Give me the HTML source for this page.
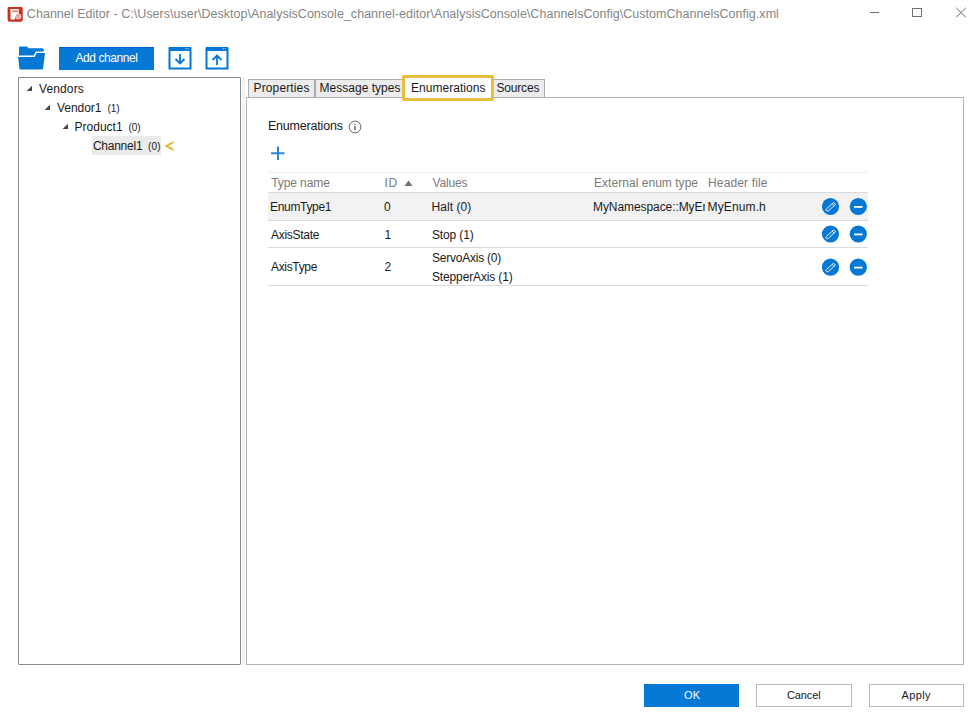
<!DOCTYPE html>
<html><head><meta charset="utf-8">
<style>
html,body{margin:0;padding:0;background:#fff;}
body{width:980px;height:723px;position:relative;overflow:hidden;font-family:"Liberation Sans",sans-serif;color:#1a1a1a;}
.a{position:absolute;box-sizing:border-box;}
.t{position:absolute;white-space:nowrap;line-height:normal;}
svg{position:absolute;}
</style></head><body>

<!-- title icon -->
<svg style="left:7px;top:7px" width="16" height="15" viewBox="0 0 16 15">
  <rect x="0.6" y="-0.2" width="15.1" height="14.9" rx="2" fill="#c5321c"/>
  <path d="M3.1 2.1 H11.7 V8 A3.4 3.4 0 0 0 8 12.4 H3.1 L3.9 11.2 L3.1 10 L3.9 8.8 L3.1 7.6 L3.9 6.4 L3.1 5.2 L3.9 4 L3.1 2.8 Z" fill="#fff"/>
  <rect x="5.1" y="3.2" width="5.8" height="2.2" fill="#e59a8e"/>
  <circle cx="11.2" cy="9.4" r="2.9" fill="#fff"/>
  <circle cx="11.2" cy="9.4" r="2.0" fill="none" stroke="#d2594a" stroke-width="0.7"/>
  <rect x="10.6" y="8" width="1.2" height="2.6" fill="#e07a6c"/>
</svg>
<!-- window controls -->
<div class="a" style="left:870px;top:12px;width:9px;height:1px;background:#707070"></div>
<div class="a" style="left:912px;top:8px;width:10px;height:9px;border:1px solid #707070"></div>
<svg style="left:955px;top:7px" width="12" height="11" viewBox="0 0 12 11"><path d="M1.2 0.8L10.8 10.2M10.8 0.8L1.2 10.2" stroke="#707070" stroke-width="1"/></svg>

<!-- toolbar: folder -->
<svg style="left:18px;top:46px" width="28" height="25" viewBox="0 0 28 25">
  <path d="M1 1.8 Q1 0.6 2.2 0.6 H9.3 L10.4 2.2 H24.1 Q25.8 2.2 25.8 3.9 V14 H1 Z" fill="#0578d6"/>
  <path d="M-1 10.2 H16.3 L18.4 6.3 H28" fill="none" stroke="#fff" stroke-width="1.5"/>
  <path d="M0.1 11 H16.8 L18.9 7.1 H27 L25.1 22.6 Q25 23.4 24.2 23.4 H2.3 Q1.5 23.4 1.4 22.6 Z" fill="#0578d6"/>
</svg>
<!-- add channel btn -->
<div class="a" style="left:59px;top:47px;width:95px;height:23px;background:#0678d6;border-top:1px solid #0062cc"></div>
<!-- download -->
<svg style="left:168px;top:46px" width="24" height="24" viewBox="0 0 24 24">
  <rect x="1.5" y="2.5" width="21" height="20" fill="none" stroke="#0578d6" stroke-width="2"/>
  <rect x="1" y="1" width="22" height="4" fill="#0578d6"/>
  <rect x="17.6" y="2.4" width="1.3" height="0.9" fill="#cfe3f7"/><rect x="19.6" y="2.4" width="1.3" height="0.9" fill="#cfe3f7"/>
  <path d="M12 8 V17.5 M7.5 13 L12 17.5 L16.5 13" fill="none" stroke="#0578d6" stroke-width="1.8"/>
</svg>
<!-- upload -->
<svg style="left:205px;top:46px" width="24" height="24" viewBox="0 0 24 24">
  <rect x="1.5" y="2.5" width="21" height="20" fill="none" stroke="#0578d6" stroke-width="2"/>
  <rect x="1" y="1" width="22" height="4" fill="#0578d6"/>
  <rect x="17.6" y="2.4" width="1.3" height="0.9" fill="#cfe3f7"/><rect x="19.6" y="2.4" width="1.3" height="0.9" fill="#cfe3f7"/>
  <path d="M12 19 V9.5 M7.5 14 L12 9.5 L16.5 14" fill="none" stroke="#0578d6" stroke-width="1.8"/>
</svg>

<!-- tree panel -->
<div class="a" style="left:18px;top:77px;width:223px;height:588px;border:1px solid #868c96;border-radius:1px"></div>
<!-- splitter -->
<div class="a" style="left:242px;top:77px;width:3px;height:588px;background:#f4f4f4"></div>
<!-- tree triangles -->
<svg style="left:26px;top:85px" width="7" height="7" viewBox="0 0 7 7"><path d="M6 0.8 V6 H0.6 Z" fill="#484848"/></svg>
<svg style="left:44px;top:104px" width="7" height="7" viewBox="0 0 7 7"><path d="M6 0.8 V6 H0.6 Z" fill="#484848"/></svg>
<svg style="left:62px;top:123px" width="7" height="7" viewBox="0 0 7 7"><path d="M6 0.8 V6 H0.6 Z" fill="#484848"/></svg>
<!-- selected channel highlight -->
<div class="a" style="left:92px;top:136px;width:69px;height:19px;background:#ebebeb"></div>
<!-- yellow < -->
<svg style="left:164px;top:140px" width="11" height="12" viewBox="0 0 11 12"><path d="M9.5 2 L2.5 6 L9.5 10" fill="none" stroke="#e8b32a" stroke-width="2"/></svg>

<!-- tabs -->
<div class="a" style="left:248px;top:79px;width:67px;height:19px;background:#ececec;border:1px solid #acacac;border-bottom:none;border-right:none"></div>
<div class="a" style="left:314px;top:79px;width:89px;height:19px;background:#ececec;border:1px solid #acacac;border-bottom:none;border-left:2px solid #acacac"></div>
<div class="a" style="left:493px;top:79px;width:52px;height:19px;background:#ececec;border:1px solid #acacac;border-bottom:none;border-left:none"></div>

<!-- tab panel -->
<div class="a" style="left:246px;top:97px;width:718px;height:568px;border:1px solid #b4b4b4"></div>
<!-- active tab -->
<div class="a" style="left:402px;top:75px;width:92px;height:26px;background:#fff;border:3px solid #ebbd3c;border-radius:2px"></div>

<!-- info icon -->
<svg style="left:348px;top:120px" width="14" height="14" viewBox="0 0 14 14">
  <circle cx="7" cy="7" r="5.9" fill="none" stroke="#555" stroke-width="0.9"/>
  <rect x="6.4" y="6" width="1.2" height="4.2" fill="#444"/>
  <rect x="6.4" y="3.8" width="1.2" height="1.2" fill="#444"/>
</svg>
<!-- plus -->
<svg style="left:270px;top:146px" width="16" height="15" viewBox="0 0 16 15">
  <path d="M8 0.5 V14 M1 7.25 H14.5" stroke="#2e86d8" stroke-width="2"/>
</svg>

<!-- table -->
<div class="a" style="left:268px;top:172px;width:600px;height:1px;background:#f0f0f0"></div>
<div class="a" style="left:268px;top:192px;width:600px;height:1px;background:#dadada"></div>
<div class="a" style="left:268px;top:193px;width:600px;height:27px;background:#f2f2f2"></div>
<div class="a" style="left:268px;top:220px;width:600px;height:1px;background:#dadada"></div>
<div class="a" style="left:268px;top:247px;width:600px;height:1px;background:#dadada"></div>
<div class="a" style="left:268px;top:285px;width:600px;height:1px;background:#dadada"></div>
<!-- sort triangle -->
<svg style="left:404px;top:180px" width="9" height="7" viewBox="0 0 9 7"><path d="M0.5 6 L4.5 0.5 L8.5 6 Z" fill="#707070"/></svg>
<!-- clip external enum type -->

<!-- row icons -->
<svg style="left:821px;top:197px" width="48" height="19" viewBox="0 0 48 19">
  <circle cx="9.5" cy="9.5" r="8.6" fill="#0578d6"/>
  <g transform="translate(9.7 9.9) rotate(-42)"><path d="M-4.4 -1.35 H5.2 V1.35 H-4.4 A1.35 1.35 0 0 1 -4.4 -1.35 Z M3.3 -1.35 V1.35" fill="none" stroke="#fff" stroke-width="0.85"/></g>
  <circle cx="37.3" cy="9.5" r="8.6" fill="#0578d6"/>
  <rect x="33.1" y="9" width="8.4" height="1.8" fill="#fff"/>
</svg>
<svg style="left:821px;top:224px;transform:translateY(0.5px)" width="48" height="19" viewBox="0 0 48 19">
  <circle cx="9.5" cy="9.5" r="8.6" fill="#0578d6"/>
  <g transform="translate(9.7 9.9) rotate(-42)"><path d="M-4.4 -1.35 H5.2 V1.35 H-4.4 A1.35 1.35 0 0 1 -4.4 -1.35 Z M3.3 -1.35 V1.35" fill="none" stroke="#fff" stroke-width="0.85"/></g>
  <circle cx="37.3" cy="9.5" r="8.6" fill="#0578d6"/>
  <rect x="33.1" y="9" width="8.4" height="1.8" fill="#fff"/>
</svg>
<svg style="left:821px;top:257px;transform:translateY(0.7px)" width="48" height="19" viewBox="0 0 48 19">
  <circle cx="9.5" cy="9.5" r="8.6" fill="#0578d6"/>
  <g transform="translate(9.7 9.9) rotate(-42)"><path d="M-4.4 -1.35 H5.2 V1.35 H-4.4 A1.35 1.35 0 0 1 -4.4 -1.35 Z M3.3 -1.35 V1.35" fill="none" stroke="#fff" stroke-width="0.85"/></g>
  <circle cx="37.3" cy="9.5" r="8.6" fill="#0578d6"/>
  <rect x="33.1" y="9" width="8.4" height="1.8" fill="#fff"/>
</svg>

<!-- bottom buttons -->
<div class="a" style="left:644px;top:684px;width:95px;height:23px;background:#0678d6"></div>
<div class="a" style="left:756px;top:684px;width:96px;height:23px;border:1px solid #b9b9b9;background:#fff"></div>
<div class="a" style="left:869px;top:684px;width:95px;height:23px;border:1px solid #b9b9b9;background:#fff"></div>

<div class="t" style="left:26.87px;top:7px;font-size:12.5px;letter-spacing:0.030px;color:#858585;">Channel Editor - C:\Users\user\Desktop\AnalysisConsole_channel-editor\AnalysisConsole\ChannelsConfig\CustomChannelsConfig.xml</div>
<div class="t" style="left:75.48px;top:51px;font-size:12px;letter-spacing:-0.439px;color:#ffffff;">Add channel</div>
<div class="t" style="left:38.95px;top:82px;font-size:12px;letter-spacing:0.132px;color:#1a1a1a;">Vendors</div>
<div class="t" style="left:56.95px;top:101px;font-size:12px;letter-spacing:-0.038px;color:#1a1a1a;">Vendor1</div>
<div class="t" style="left:107.38px;top:103px;font-size:10px;letter-spacing:0.009px;color:#1a1a1a;">(1)</div>
<div class="t" style="left:74.52px;top:120px;font-size:12px;letter-spacing:0.006px;color:#1a1a1a;">Product1</div>
<div class="t" style="left:128.38px;top:122px;font-size:10px;letter-spacing:0.009px;color:#1a1a1a;">(0)</div>
<div class="t" style="left:92.89px;top:139px;font-size:12px;letter-spacing:-0.240px;color:#1a1a1a;">Channel1</div>
<div class="t" style="left:147.88px;top:141px;font-size:10px;letter-spacing:0.259px;color:#1a1a1a;">(0)</div>
<div class="t" style="left:253.52px;top:81px;font-size:12px;letter-spacing:0.136px;color:#1a1a1a;">Properties</div>
<div class="t" style="left:319.52px;top:81px;font-size:12px;letter-spacing:0.018px;color:#1a1a1a;">Message types</div>
<div class="t" style="left:411.02px;top:81px;font-size:12px;letter-spacing:0.034px;color:#1a1a1a;">Enumerations</div>
<div class="t" style="left:496.46px;top:81px;font-size:12px;letter-spacing:-0.174px;color:#1a1a1a;">Sources</div>
<div class="t" style="left:267.97px;top:119px;font-size:12.5px;letter-spacing:-0.195px;color:#1a1a1a;">Enumerations</div>
<div class="t" style="left:271.23px;top:176px;font-size:12px;letter-spacing:-0.091px;color:#7a7a7a;">Type name</div>
<div class="t" style="left:384.39px;top:176px;font-size:12px;letter-spacing:0.682px;color:#7a7a7a;">ID</div>
<div class="t" style="left:432.45px;top:176px;font-size:12px;letter-spacing:-0.141px;color:#7a7a7a;">Values</div>
<div class="t" style="left:594.02px;top:176px;font-size:12px;letter-spacing:0.037px;color:#7a7a7a;">External enum type</div>
<div class="t" style="left:708.02px;top:176px;font-size:12px;letter-spacing:0.149px;color:#7a7a7a;">Header file</div>
<div class="t" style="left:270.02px;top:200px;font-size:12px;letter-spacing:-0.329px;color:#1a1a1a;">EnumType1</div>
<div class="t" style="left:384.03px;top:200px;font-size:12px;letter-spacing:0.000px;color:#1a1a1a;">0</div>
<div class="t" style="left:431.52px;top:200px;font-size:12px;letter-spacing:0.056px;color:#1a1a1a;">Halt (0)</div>
<div class="a" style="left:590px;top:195px;width:114.5px;height:22px;overflow:hidden"><div class="t" style="left:3.02px;top:5px;font-size:12px;letter-spacing:-0.080px;color:#1a1a1a;">MyNamespace::MyEnum</div></div>
<div class="t" style="left:707.52px;top:200px;font-size:12px;letter-spacing:0.130px;color:#1a1a1a;">MyEnum.h</div>
<div class="t" style="left:270.98px;top:228px;font-size:12px;letter-spacing:-0.267px;color:#1a1a1a;">AxisState</div>
<div class="t" style="left:384.59px;top:228px;font-size:12px;letter-spacing:0.000px;color:#1a1a1a;">1</div>
<div class="t" style="left:431.96px;top:228px;font-size:12px;letter-spacing:-0.128px;color:#1a1a1a;">Stop (1)</div>
<div class="t" style="left:270.98px;top:260px;font-size:12px;letter-spacing:-0.327px;color:#1a1a1a;">AxisType</div>
<div class="t" style="left:384.40px;top:260px;font-size:12px;letter-spacing:0.000px;color:#1a1a1a;">2</div>
<div class="t" style="left:431.96px;top:251px;font-size:12px;letter-spacing:-0.227px;color:#1a1a1a;">ServoAxis (0)</div>
<div class="t" style="left:431.96px;top:270px;font-size:12px;letter-spacing:-0.136px;color:#1a1a1a;">StepperAxis (1)</div>
<div class="t" style="left:683.98px;top:689px;font-size:11px;letter-spacing:0.251px;color:#ffffff;">OK</div>
<div class="t" style="left:786.94px;top:689px;font-size:11px;letter-spacing:-0.089px;color:#1a1a1a;">Cancel</div>
<div class="t" style="left:901.48px;top:689px;font-size:11px;letter-spacing:0.382px;color:#1a1a1a;">Apply</div>
</body></html>
